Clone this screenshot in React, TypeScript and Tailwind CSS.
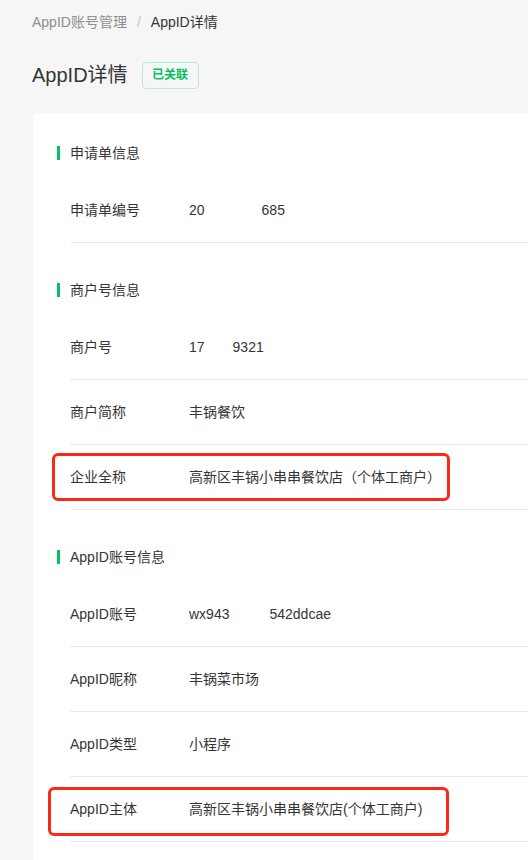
import React from "react";

const font = { fontFamily: '"Liberation Sans", "Noto Sans CJK SC", sans-serif' };

function SectionHeader({ title }: { title: string }) {
  return (
    <div className="flex items-center h-[20px]">
      <div className="w-[3px] h-[14px] bg-[#07c160] mr-[10px]" />
      <span className="text-[14px] leading-[20px] text-[#353535]">{title}</span>
    </div>
  );
}

function Row({
  label,
  children,
  box,
}: {
  label: string;
  children: React.ReactNode;
  box?: "a" | "b";
}) {
  return (
    <div className="relative flex items-center h-[65px] border-b border-[#e7e7e7] text-[14px] leading-[20px] text-[#353535]">
      <div className="w-[119px] shrink-0">{label}</div>
      <div className="flex items-center whitespace-nowrap">{children}</div>
      {box === "a" && (
        <div className="absolute left-[-18px] top-[8px] w-[398px] h-[48px] border-[3px] border-[#fa2a16] rounded-[6px]" />
      )}
      {box === "b" && (
        <div className="absolute left-[-22px] top-[10px] w-[401px] h-[49px] border-[3px] border-[#fa2a16] rounded-[6px]" />
      )}
    </div>
  );
}

function Section({
  title,
  first,
  children,
}: {
  title: string;
  first?: boolean;
  children: React.ReactNode;
}) {
  return (
    <div className={first ? "" : "mt-[37px]"}>
      <SectionHeader title={title} />
      <div className="ml-[13px] mt-[15px]">{children}</div>
    </div>
  );
}

export default function App() {
  return (
    <div className="w-[528px] h-[860px] overflow-hidden bg-[#f6f6f6]" style={font}>
      <div className="pl-[32px] pt-[12px]">
        <div className="flex items-center h-[20px] text-[14px] leading-[20px]">
          <span className="text-[#8f8f8f]">AppID账号管理</span>
          <span className="text-[#c4c4c4] mx-[10px]">/</span>
          <span className="text-[#353535]">AppID详情</span>
        </div>
        <div className="flex items-center mt-[29px] h-[28px]">
          <span className="text-[20px] leading-[28px] text-[#353535]">AppID详情</span>
          <span className="ml-[14px] h-[27px] w-[57px] flex items-center justify-center border border-[#bfe9cd] rounded-[4px] text-[12px] text-[#07c160] font-semibold">
            已关联
          </span>
        </div>
      </div>
      <div className="ml-[33px] mt-[24px] bg-white rounded-tl-[4px] pl-[24px] pt-[30px] pb-[20px]">
        <Section title="申请单信息" first>
          <Row label="申请单编号">
            <span>20</span>
            <span className="inline-block w-[57px]" />
            <span>685</span>
          </Row>
        </Section>
        <Section title="商户号信息">
          <Row label="商户号">
            <span>17</span>
            <span className="inline-block w-[28px]" />
            <span>9321</span>
          </Row>
          <Row label="商户简称">丰锅餐饮</Row>
          <Row label="企业全称" box="a">
            高新区丰锅小串串餐饮店（个体工商户）
          </Row>
        </Section>
        <Section title="AppID账号信息">
          <Row label="AppID账号">
            <span>wx943</span>
            <span className="inline-block w-[40px]" />
            <span>542ddcae</span>
          </Row>
          <Row label="AppID昵称">丰锅菜市场</Row>
          <Row label="AppID类型">小程序</Row>
          <Row label="AppID主体" box="b">
            高新区丰锅小串串餐饮店(个体工商户)
          </Row>
        </Section>
      </div>
    </div>
  );
}
